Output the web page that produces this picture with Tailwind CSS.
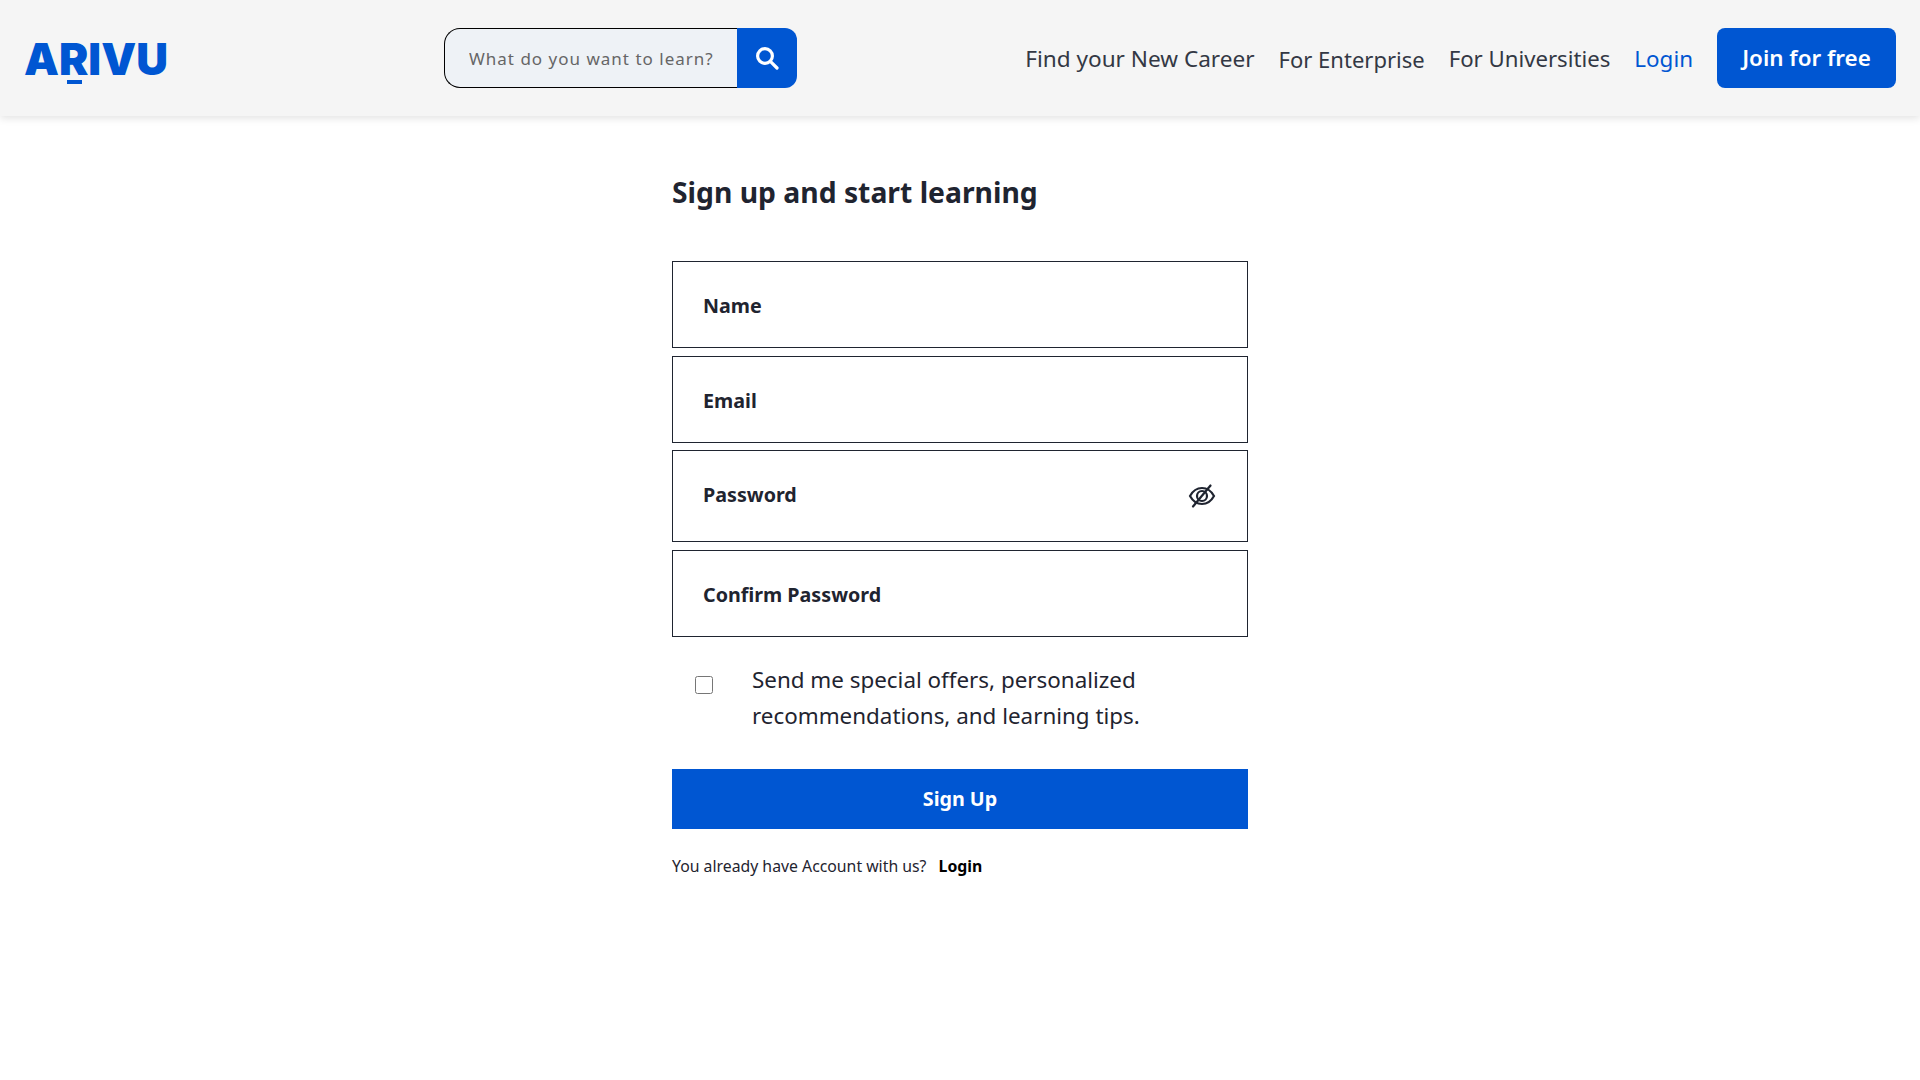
<!DOCTYPE html>
<html lang="en">
<head>
    <meta charset="UTF-8">
    <title>Arivu | Sign up</title>
    <script src="https://cdn.jsdelivr.net/npm/@tailwindcss/browser@4"></script>
</head>
<body class="bg-white text-[#1f2430] font-['Noto_Sans',sans-serif] min-h-screen">
    <!-- Header -->
    <header class="h-[116px] bg-[#f5f5f5] shadow-[0_2px_8px_rgba(0,0,0,0.12)] flex items-center pl-6 pr-6">
        <a href="#" class="relative w-[144px] mt-[2px] shrink-0 font-['Inter',sans-serif] font-black text-[44px] leading-none text-[#0056d2] tracking-[0px]">
            ARIVU
            <span class="absolute left-[43px] top-[43px] w-[15px] h-[4px] bg-[#0056d2]"></span>
        </a>
        <form class="ml-[276px] flex w-[353px] h-[60px]">
            <input type="text" placeholder="What do you want to learn?" class="w-[293px] h-full bg-[#eef2f6] border border-black border-r-0 rounded-l-[16px] pl-6 pr-2 text-[17px] tracking-[1px] outline-none placeholder:text-[#666666]">
            <button type="button" class="w-[60px] h-full bg-[#0056d2] rounded-r-[12px] flex items-center justify-center">
                <svg width="24" height="24" viewBox="0 0 24 24" fill="none" stroke="white" stroke-width="3.2" stroke-linecap="round"><circle cx="10" cy="10" r="7.400"/><path d="M15.600 15.600 22 22"/></svg>
            </button>
        </form>
        <nav class="ml-auto flex items-center gap-6 text-[22.4px]">
            <a href="#" class="mt-[2px] text-[22.6px] text-[#333844]">Find your New Career</a>
            <a href="#" class="mt-[2px] text-[22px] text-[#333844]">For Enterprise</a>
            <a href="#" class="mt-[2px] text-[22.2px] text-[#333844]">For Universities</a>
            <a href="#" class="mt-[2px] text-[#0056d2]">Login</a>
            <a href="#" class="w-[179px] h-[60px] rounded-[8px] bg-[#0056d2] text-white font-semibold flex items-center justify-center">Join for free</a>
        </nav>
    </header>

    <!-- Signup form -->
    <main class="w-[576px] mx-auto">
        <h1 class="mt-[52px] text-[28.3px] leading-[48px] font-bold text-[#1f2430]">Sign up and start learning</h1>
        <form class="mt-[45px] flex flex-col gap-2">
            <input type="text" placeholder="Name" class="w-full h-[87px] border border-[#1f2430] px-[30px] pt-px text-[19.7px] font-bold outline-none placeholder:text-[#1f2430]">
            <input type="email" placeholder="Email" class="w-full h-[87px] border border-[#1f2430] px-[30px] pt-px text-[19.7px] font-bold outline-none placeholder:text-[#1f2430]">
            <div class="relative -mt-px">
                <input type="password" placeholder="Password" class="w-full h-[92px] border border-[#1f2430] pl-[30px] pr-16 pb-1 text-[19.7px] font-bold outline-none placeholder:text-[#1f2430]">
                <svg class="absolute right-[32px] top-[32px]" width="28" height="28" viewBox="0 0 28 28" fill="none" stroke="#1f2430" stroke-width="2.200" stroke-linecap="round"><path d="M2 14c3-5.500 7-8 12-8s9 2.500 12 8c-3 5.500-7 8-12 8s-9-2.500-12-8Z"/><circle cx="14" cy="14" r="5"/><path d="M22.500 3.500 5 24.500"/></svg>
            </div>
            <input type="password" placeholder="Confirm Password" class="w-full h-[87px] border border-[#1f2430] px-[30px] pt-px text-[19.7px] font-bold outline-none placeholder:text-[#1f2430]">
            <label class="mt-[17px] flex items-start text-[22.4px] leading-[36px] text-[#1f2430]">
                <input type="checkbox" class="ml-[23px] mt-[14px] w-[18px] h-[18px] shrink-0">
                <span class="ml-[39px]">Send me special offers, personalized recommendations, and learning tips.</span>
            </label>
            <button type="button" class="mt-[27px] w-full h-[60px] bg-[#0056d2] text-white text-[19.7px] font-bold">Sign Up</button>
        </form>
        <p class="mt-[25px] text-[15.8px] leading-6 text-[#1f2430]">You already have Account with us? <a href="#" class="ml-2 font-bold text-black">Login</a></p>
    </main>
</body>
</html>
